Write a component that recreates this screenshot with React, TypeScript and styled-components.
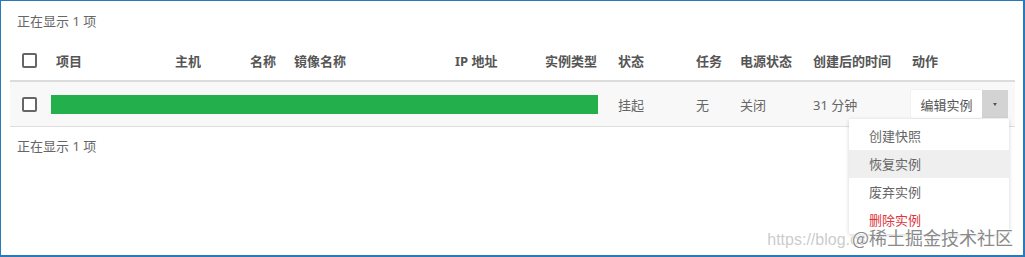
import React from "react";
import styled, { createGlobalStyle } from "styled-components";

const GlobalStyle = createGlobalStyle`
  html, body {
    margin: 0;
    padding: 0;
    background: #fff;
  }
  body {
    font-family: "Noto Sans", "Noto Sans CJK SC", sans-serif;
    font-size: 13px;
    color: #666;
  }
`;

const Frame = styled.div`
  position: relative;
  width: 1025px;
  height: 257px;
  box-sizing: border-box;
  border: 1px solid #2a7ab9;
  border-width: 1px 2px 2px 1px;
  overflow: hidden;
  padding: 0 8px 0 9px;
`;

const Summary = styled.div`
  padding: 10px 0 0 7px;
  line-height: 20px;
  height: 20px;
  color: #666;
`;

const FooterSummary = styled(Summary)`
  padding-top: 9px;
`;

const COLS = "38px 119px 75px 44px 161px 90px 73px 78px 44px 73px 99px 111px";

const HeadRow = styled.div`
  margin-top: 9px;
  display: grid;
  grid-template-columns: ${COLS};
  height: 40px;
  align-items: center;
  border-bottom: 2px solid #dcdcdc;
`;

const HeadCell = styled.div`
  padding-left: 8px;
  font-weight: 700;
  color: #555;
  white-space: nowrap;
`;

const BodyRow = styled.div`
  display: grid;
  grid-template-columns: ${COLS};
  height: 44px;
  align-items: center;
  background: #f8f8f8;
  border-bottom: 1px solid #dedede;
`;

const Cell = styled.div`
  padding-left: 8px;
  white-space: nowrap;
  color: #666;
`;

const CheckCell = styled.div`
  padding-left: 12px;
  display: flex;
  align-items: center;
`;

const Checkbox = styled.span`
  display: inline-block;
  width: 11px;
  height: 11px;
  border: 2px solid #666;
  border-radius: 2px;
  background: #fff;
`;

const BarCell = styled.div`
  grid-column: 2 / 8;
  padding: 0 12px 0 3px;
`;

const Bar = styled.div`
  height: 19px;
  background: #23b04c;
`;

const ActionCell = styled.div`
  position: relative;
  padding-left: 7px;
`;

const BtnGroup = styled.div`
  display: inline-flex;
  height: 28px;
`;

const MainBtn = styled.div`
  width: 71px;
  display: flex;
  align-items: center;
  justify-content: center;
  background: #fff;
  color: #555;
  box-shadow: 0 0 1px rgba(0, 0, 0, 0.15);
`;

const CaretBtn = styled.div`
  width: 26px;
  display: flex;
  align-items: center;
  justify-content: center;
  background: #d3d3d3;
`;

const Caret = styled.span`
  width: 0;
  height: 0;
  border-left: 2px solid transparent;
  border-right: 2px solid transparent;
  border-top: 3px solid #555;
`;

const Menu = styled.div`
  position: absolute;
  top: 29px;
  right: 6px;
  width: 160px;
  background: #fff;
  box-shadow: 0 1px 4px rgba(0, 0, 0, 0.18);
  padding-top: 3px;
  z-index: 2;
`;

const MenuItem = styled.div<{ $active?: boolean; $danger?: boolean }>`
  height: 28px;
  line-height: 28px;
  padding-left: 20px;
  color: ${(p) => (p.$danger ? "#e0353d" : "#666")};
  background: ${(p) => (p.$active ? "#efefef" : "transparent")};
`;

const Watermark = styled.div`
  position: absolute;
  right: 10px;
  bottom: 5px;
  display: flex;
  align-items: baseline;
  z-index: 3;
  pointer-events: none;
`;

const WmUrl = styled.span`
  font-family: "Liberation Sans", Arial, sans-serif;
  font-size: 16px;
  color: rgba(180, 180, 180, 0.7);
  margin-right: -14px;
`;

const WmBrand = styled.span`
  font-family: "Noto Sans CJK SC", sans-serif;
  font-size: 18px;
  color: #8a8a8a;
  text-shadow: 0 0 2px #fff, 0 0 2px #fff, 0 0 1px #fff;
`;

const headers = ["项目", "主机", "名称", "镜像名称", "IP 地址", "实例类型", "状态", "任务", "电源状态", "创建后的时间", "动作"];

export default function App() {
  return (
    <>
      <GlobalStyle />
      <Frame>
        <Summary>正在显示 1 项</Summary>
        <HeadRow>
          <CheckCell>
            <Checkbox />
          </CheckCell>
          {headers.map((h) => (
            <HeadCell key={h}>{h}</HeadCell>
          ))}
        </HeadRow>
        <BodyRow>
          <CheckCell>
            <Checkbox />
          </CheckCell>
          <BarCell>
            <Bar />
          </BarCell>
          <Cell>挂起</Cell>
          <Cell>无</Cell>
          <Cell>关闭</Cell>
          <Cell>31 分钟</Cell>
          <ActionCell>
            <BtnGroup>
              <MainBtn>编辑实例</MainBtn>
              <CaretBtn>
                <Caret />
              </CaretBtn>
            </BtnGroup>
            <Menu>
              <MenuItem>创建快照</MenuItem>
              <MenuItem $active>恢复实例</MenuItem>
              <MenuItem>废弃实例</MenuItem>
              <MenuItem $danger>删除实例</MenuItem>
            </Menu>
          </ActionCell>
        </BodyRow>
        <FooterSummary>正在显示 1 项</FooterSummary>
        <Watermark>
          <WmUrl>https://blog.cs</WmUrl>
          <WmBrand>@稀土掘金技术社区</WmBrand>
        </Watermark>
      </Frame>
    </>
  );
}
